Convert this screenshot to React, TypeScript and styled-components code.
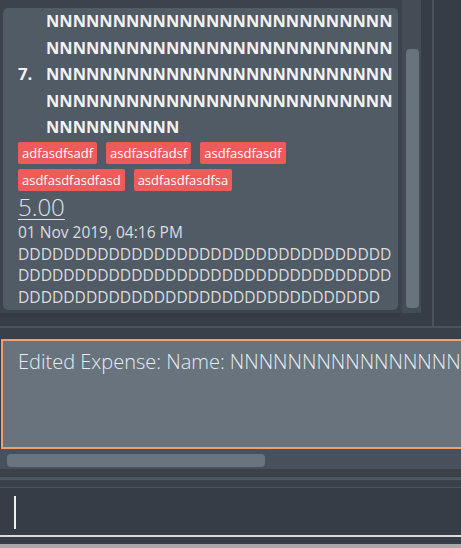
import React from 'react';
import styled, { createGlobalStyle } from 'styled-components';

const GlobalStyle = createGlobalStyle`
  html, body { margin: 0; padding: 0; }
  body {
    background: #363d46;
    font-family: "Open Sans", "Noto Sans", "DejaVu Sans", sans-serif;
    overflow: hidden;
  }
  #root { width: 461px; height: 548px; }
`;

const Window = styled.div`
  width: 461px;
  height: 548px;
  display: flex;
  flex-direction: column;
  background: #363d46;
  overflow: hidden;
`;

const ListSection = styled.div`
  height: 326px;
  flex-shrink: 0;
  display: flex;
  border-bottom: 2px solid #4a535d;
`;

const ListPane = styled.div`
  width: 432px;
  flex-shrink: 0;
  box-sizing: border-box;
  padding: 0 11px 13px 0;
  background: #363d46;
`;

const ListViewport = styled.div`
  height: 100%;
  display: flex;
  background: #3c434c;
`;

const ListItems = styled.div`
  flex: 1;
  min-width: 0;
  padding: 8px 4px 0 3px;
  overflow: hidden;
`;

const VScrollTrack = styled.div`
  width: 19px;
  flex-shrink: 0;
  box-sizing: border-box;
  padding: 49px 2px 5px 4px;
  background: #444c56;
`;

const VScrollThumb = styled.div`
  height: 100%;
  border-radius: 4px;
  background: #68737e;
`;

const Divider = styled.div`
  width: 2px;
  flex-shrink: 0;
  background: #4a535d;
`;

const SidePane = styled.div`
  flex: 1;
  background: #363d46;
`;

const Card = styled.div`
  background: #515b66;
  border-radius: 5px;
  padding: 0 0 1px 15px;
  color: #eeeeee;
`;

const HeaderRow = styled.div`
  display: flex;
  align-items: center;
`;

const IdLabel = styled.div`
  width: 28px;
  flex-shrink: 0;
  font-size: 16.8px;
  font-weight: 700;
  line-height: 26.5px;
  color: #f2f2f2;
`;

const NameLabel = styled.div`
  flex: 1;
  min-width: 0;
  font-size: 16.4px;
  font-weight: 700;
  line-height: 26.5px;
  color: #f2f2f2;
  word-break: break-all;
`;

const Tags = styled.div`
  display: flex;
  flex-wrap: wrap;
  gap: 5px 9px;
  margin-top: 1px;
  padding-right: 20px;
`;

const Tag = styled.span`
  background: #ef5b5b;
  color: #ffffff;
  font-size: 13px;
  line-height: 16px;
  padding: 3px 4px;
  border-radius: 2px;
`;

const Amount = styled.div`
  font-size: 24px;
  font-weight: 300;
  line-height: 28px;
  margin-top: 2px;
  color: #e2e2e2;
  text-decoration: underline;
  text-decoration-thickness: 1px;
  text-underline-offset: 3px;
`;

const DateLabel = styled.div`
  font-size: 15.5px;
  line-height: 20px;
  margin-top: 1px;
  color: #dddddd;
`;

const Description = styled.div`
  font-size: 15.6px;
  line-height: 21.7px;
  margin-top: 2px;
  color: #dddddd;
  word-break: break-all;
`;

const ResultGap = styled.div`
  height: 11px;
  flex-shrink: 0;
  background: #39404a;
`;

const ResultBox = styled.div`
  height: 110px;
  flex-shrink: 0;
  box-sizing: border-box;
  margin-left: 1px;
  border: 2px solid #ee9f6d;
  border-right: none;
  background: #68737e;
  padding: 7px 15px;
  overflow: hidden;
  white-space: nowrap;
  font-size: 20px;
  font-weight: 300;
  color: #e6edf0;
`;

const HScrollTrack = styled.div`
  height: 20px;
  flex-shrink: 0;
  box-sizing: border-box;
  padding: 5px 0 2px 7px;
  background: #48515b;
`;

const HScrollThumb = styled.div`
  width: 258px;
  height: 13px;
  border-radius: 4px;
  background: #69747f;
`;

const Splitter = styled.div`
  height: 8px;
  flex-shrink: 0;
  background: #3a414a;
  border-bottom: 3px solid #4c5560;
`;

const CommandPane = styled.div`
  padding-top: 7px;
  flex-shrink: 0;
  background: #3a414a;
`;

const CommandBox = styled.div`
  height: 47px;
  box-sizing: content-box;
  border-top: 1px solid #4a535d;
  border-bottom: 2px solid #dcdcdc;
  background: #363d47;
  padding: 0 14px;
  display: flex;
  align-items: flex-start;
`;

const Caret = styled.span`
  display: block;
  width: 2px;
  height: 33px;
  margin-top: 8px;
  background: #f0f0f0;
`;

const StatusGap = styled.div`
  height: 7px;
  flex-shrink: 0;
  background: #363d47;
`;

const StatusBar = styled.div`
  flex: 1;
  background: #a9a9a9;
`;

const tags = ['adfasdfsadf', 'asdfasdfadsf', 'asdfasdfasdf', 'asdfasdfasdfasd', 'asdfasdfasdfsa'];

export default function App() {
  const name = 'N'.repeat(114);
  const desc = 'D'.repeat(98);
  return (
    <>
      <GlobalStyle />
      <Window>
        <ListSection>
          <ListPane>
            <ListViewport>
              <ListItems>
                <Card>
                  <HeaderRow>
                    <IdLabel>7.</IdLabel>
                    <NameLabel>{name}</NameLabel>
                  </HeaderRow>
                  <Tags>
                    {tags.map((t) => (
                      <Tag key={t}>{t}</Tag>
                    ))}
                  </Tags>
                  <Amount>5.00</Amount>
                  <DateLabel>01 Nov 2019, 04:16 PM</DateLabel>
                  <Description>{desc}</Description>
                </Card>
              </ListItems>
              <VScrollTrack>
                <VScrollThumb />
              </VScrollTrack>
            </ListViewport>
          </ListPane>
          <Divider />
          <SidePane />
        </ListSection>
        <ResultGap />
        <ResultBox>Edited Expense: Name: {name}</ResultBox>
        <HScrollTrack>
          <HScrollThumb />
        </HScrollTrack>
        <Splitter />
        <CommandPane>
          <CommandBox>
            <Caret />
          </CommandBox>
        </CommandPane>
        <StatusGap />
        <StatusBar />
      </Window>
    </>
  );
}
